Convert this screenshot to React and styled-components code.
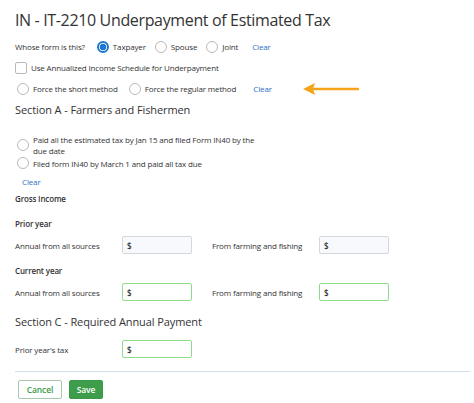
import React from "react";
import styled, { createGlobalStyle } from "styled-components";

const GlobalStyle = createGlobalStyle`
  html, body {
    margin: 0;
    padding: 0;
    background: #ffffff;
  }
  body {
    font-family: "Open Sans", "Noto Sans", sans-serif;
    color: #333333;
  }
`;

function Radio({ checked, label, gap }) {
  return (
    <Choice gap={gap}>
      <RadioDot checked={checked} />
      {label && <ChoiceLabel>{label}</ChoiceLabel>}
    </Choice>
  );
}

function MoneyInput({ valid }) {
  return (
    <InputWrap valid={valid}>
      <Dollar>$</Dollar>
    </InputWrap>
  );
}

function Arrow() {
  return (
    <ArrowSvg width="56" height="14" viewBox="0 0 56 14">
      <line x1="8" y1="7" x2="55" y2="7" stroke="#f5a31a" strokeWidth="2.6" strokeLinecap="round" />
      <polygon points="0,7 12,1 10,7 12,13" fill="#f5a31a" />
    </ArrowSvg>
  );
}

export default function App() {
  return (
    <>
      <GlobalStyle />
      <Page>
        <Title>IN - IT-2210 Underpayment of Estimated Tax</Title>

        <Row>
          <Question>Whose form is this?</Question>
          <Radio checked label="Taxpayer" />
          <Radio label="Spouse" />
          <Radio label="Joint" gap="14px" />
          <ClearLink>Clear</ClearLink>
        </Row>

        <Row>
          <Check />
          <ChoiceLabel>Use Annualized Income Schedule for Underpayment</ChoiceLabel>
        </Row>

        <Row indent>
          <Radio label="Force the short method" gap="11px" />
          <Radio label="Force the regular method" gap="17px" />
          <ClearLink>Clear</ClearLink>
          <Arrow />
        </Row>

        <SectionTitle>Section A - Farmers and Fishermen</SectionTitle>

        <OptionList>
          <Option>
            <RadioDot />
            <OptionText>
              Paid all the estimated tax by Jan 15 and filed Form IN40 by the due date
            </OptionText>
          </Option>
          <Option>
            <RadioDot />
            <OptionText>Filed form IN40 by March 1 and paid all tax due</OptionText>
          </Option>
          <ClearLink small>Clear</ClearLink>
        </OptionList>

        <Heading top="5px">Gross Income</Heading>

        <Heading top="11px">Prior year</Heading>
        <FieldGrid top="5px">
          <FieldLabel>Annual from all sources</FieldLabel>
          <MoneyInput />
          <FieldLabel>From farming and fishing</FieldLabel>
          <MoneyInput />
        </FieldGrid>

        <Heading top="10px">Current year</Heading>
        <FieldGrid top="5px">
          <FieldLabel>Annual from all sources</FieldLabel>
          <MoneyInput valid />
          <FieldLabel>From farming and fishing</FieldLabel>
          <MoneyInput valid />
        </FieldGrid>

        <SectionTitle top="12px">Section C - Required Annual Payment</SectionTitle>
        <FieldGrid top="9px">
          <FieldLabel>Prior year's tax</FieldLabel>
          <MoneyInput valid />
        </FieldGrid>

        <Divider />

        <Actions>
          <CancelButton>Cancel</CancelButton>
          <SaveButton>Save</SaveButton>
        </Actions>
      </Page>
    </>
  );
}

const Page = styled.div`
  width: 474px;
  height: 403px;
  box-sizing: border-box;
  padding: 8px 4px 0 15px;
  overflow: hidden;
  font-size: 8px;
  letter-spacing: -0.15px;
`;

const Title = styled.h1`
  margin: 0 0 6px 0;
  font-size: 16px;
  font-weight: 400;
  line-height: 24px;
  color: #333333;
  letter-spacing: -0.35px;
`;

const Row = styled.div`
  display: flex;
  align-items: center;
  height: 17px;
  margin: 0 0 4px ${(p) => (p.indent ? "2px" : "0")};
`;

const Question = styled.span`
  margin-right: 12px;
`;

const Choice = styled.span`
  display: inline-flex;
  align-items: center;
  margin-right: ${(p) => p.gap || "9px"};
`;

const RadioDot = styled.span`
  flex: none;
  width: 12px;
  height: 12px;
  box-sizing: border-box;
  border-radius: 50%;
  border: ${(p) => (p.checked ? "2px solid #1f77d0" : "1px solid #b9b9b9")};
  background: ${(p) =>
    p.checked ? "radial-gradient(circle, #1f77d0 0 3.2px, #ffffff 3.6px)" : "#ffffff"};
`;

const ChoiceLabel = styled.span`
  margin-left: 4px;
  color: #333333;
`;

const Check = styled.span`
  width: 12px;
  height: 12px;
  box-sizing: border-box;
  border: 1px solid #b9b9b9;
  border-radius: 2px;
  background: #ffffff;
`;

const ClearLink = styled.span`
  margin-left: ${(p) => (p.small ? "5px" : "0")};
  margin-top: ${(p) => (p.small ? "6px" : "0")};
  color: #2c6fbf;
  cursor: pointer;
`;

const ArrowSvg = styled.svg`
  margin-left: 31px;
`;

const SectionTitle = styled.h2`
  margin: ${(p) => p.top || "4px"} 0 0 0;
  font-size: 11px;
  font-weight: 400;
  line-height: 18px;
  letter-spacing: -0.1px;
  color: #333333;
`;

const OptionList = styled.div`
  display: flex;
  flex-direction: column;
  margin-top: 15px;
  padding-left: 2px;
`;

const Option = styled.div`
  display: flex;
  align-items: center;
  margin-bottom: 1px;
`;

const OptionText = styled.span`
  margin-left: 4px;
  width: 234px;
  line-height: 11px;
`;

const Heading = styled.div`
  margin-top: ${(p) => p.top};
  font-weight: 600;
  line-height: 14px;
  color: #333333;
`;

const FieldGrid = styled.div`
  display: grid;
  grid-template-columns: 107px 70px 20px 107px 70px;
  align-items: center;
  margin-top: ${(p) => p.top};
  & > :nth-child(3) {
    grid-column: 4;
  }
`;

const FieldLabel = styled.span`
  color: #333333;
`;

const InputWrap = styled.div`
  height: 18px;
  box-sizing: border-box;
  display: flex;
  align-items: center;
  padding-left: 4px;
  border: 1px solid ${(p) => (p.valid ? "#8fdc8f" : "#d4d7dd")};
  border-radius: 2px;
  background: ${(p) => (p.valid ? "#ffffff" : "#f7f9fc")};
`;

const Dollar = styled.span`
  font-size: 8px;
  font-weight: 600;
  color: #333333;
`;

const Divider = styled.div`
  margin: 13px 0 0 0;
  height: 1px;
  background: #d5dde7;
`;

const Actions = styled.div`
  display: flex;
  gap: 7px;
  margin: 8px 0 0 3px;
`;

const ButtonBase = styled.button`
  height: 19px;
  box-sizing: border-box;
  padding: 0 6px;
  border-radius: 2px;
  font-family: "Open Sans", sans-serif;
  font-size: 8.5px;
  font-weight: 600;
  letter-spacing: -0.1px;
  cursor: pointer;
`;

const CancelButton = styled(ButtonBase)`
  width: 44px;
  border: 1px solid #a9c7ae;
  background: #ffffff;
  color: #3c9a4a;
`;

const SaveButton = styled(ButtonBase)`
  width: 34px;
  border: 1px solid #3a9a48;
  background: #3d9d4b;
  color: #ffffff;
`;
